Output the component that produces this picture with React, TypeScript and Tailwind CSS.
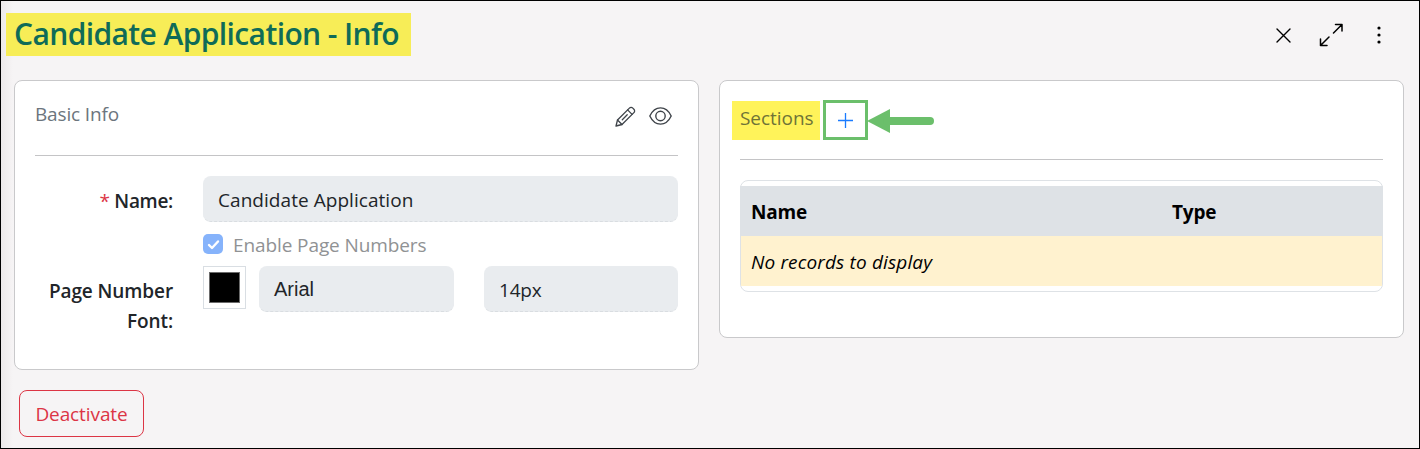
import type { ReactNode } from 'react';

const columns = [
  { label: 'Name', className: 'w-[421px]' },
  { label: 'Type', className: 'flex-1' },
];

function Card({ className, children }: { className: string; children: ReactNode }) {
  return (
    <section className={`w-[685px] rounded-lg border border-[#c9c9cb] bg-white px-5 ${className}`}>
      {children}
    </section>
  );
}

function Field({ className, children }: { className: string; children: ReactNode }) {
  return (
    <div className={`h-[46px] rounded-lg border-b border-dashed border-[#d9dde1] bg-[#e9ecef] pl-[15px] text-[#212529] ${className}`}>
      {children}
    </div>
  );
}

function PencilIcon() {
  return (
    <svg width="21" height="21" viewBox="0 0 21 21" fill="none" stroke="currentColor" strokeWidth="1.3" strokeLinecap="round" strokeLinejoin="round">
      <path d="M1 20l1.5-6L14.4 2.1a2.4 2.4 0 0 1 3.4 0l1.1 1.1a2.4 2.4 0 0 1 0 3.4L7 18.5z" />
      <path d="M2.5 14L7 18.5M12.6 3.9l4.5 4.5M12.2 8.8l-4.9 4.9" />
    </svg>
  );
}

function EyeIcon() {
  return (
    <svg width="23" height="18" viewBox="0 0 23 18" fill="none" stroke="currentColor" strokeWidth="1.4" strokeLinejoin="round">
      <path d="M.8 9C3.3 3.8 7 .9 11.5.9S19.7 3.8 22.2 9C19.7 14.2 16 17.1 11.5 17.1S3.3 14.2.8 9z" />
      <circle cx="11.5" cy="9" r="4.7" />
    </svg>
  );
}

function Header() {
  return (
    <header className="flex h-[79px] items-start justify-between">
      <h1 className="ml-[5px] mt-3 h-[43px] w-[405px] whitespace-nowrap bg-[#f7ed57] pl-2 text-[30px] font-semibold leading-[42px] tracking-[-0.61px] text-[#0f6b58]">
        Candidate Application - Info
      </h1>
      <div className="mr-[38px] mt-[22px] flex items-center text-black">
        <button type="button" aria-label="Close" className="mr-7">
          <svg width="15" height="15" viewBox="0 0 15 15" fill="none" stroke="currentColor" strokeWidth="1.4" strokeLinecap="round">
            <path d="M1 1l13 13M14 1L1 14" />
          </svg>
        </button>
        <button type="button" aria-label="Expand" className="mr-[34px]">
          <svg width="24" height="24" viewBox="0 0 24 24" fill="none" stroke="currentColor" strokeWidth="1.5" strokeLinecap="round" strokeLinejoin="round">
            <path d="M14.5 10L23 1.5M16.5 1.5H23V8M10 14l-8.500 8.500M1.500 16v6.500H8" />
          </svg>
        </button>
        <button type="button" aria-label="More">
          <svg width="4" height="18" viewBox="0 0 4 18" fill="currentColor">
            <circle cx="2" cy="2" r="1.6" />
            <circle cx="2" cy="9" r="1.6" />
            <circle cx="2" cy="16" r="1.6" />
          </svg>
        </button>
      </div>
    </header>
  );
}

function BasicInfo() {
  return (
    <Card className="h-[290px]">
      <div className="flex h-[75px] justify-between border-b border-[#c4c4c6] pr-[6px] text-[#6c757d]">
        <h2 className="mt-[19px] leading-7 tracking-[-0.15px]">Basic Info</h2>
        <div className="mt-[25px] flex items-start gap-[13px] text-[#3f444a]">
          <PencilIcon />
          <div className="pt-px">
            <EyeIcon />
          </div>
        </div>
      </div>

      <div className="mt-5 flex h-[46px]">
        <div className="w-[138px] shrink-0 whitespace-nowrap text-right font-semibold leading-[50px] tracking-[-0.3px] text-[#212529]">
          <span className="font-normal text-[#dc3545]">*</span> Name:
        </div>
        <Field className="ml-[30px] flex-1 leading-[48px] tracking-[0.05px]">Candidate Application</Field>
      </div>

      <div className="ml-[168px] flex h-11 items-center gap-2.5 tracking-[-0.1px] text-[#909294]">
        <span className="grid h-5 w-5 place-items-center rounded-[5px] bg-[#86b3fb]">
          <svg width="13" height="13" viewBox="0 0 13 13" fill="none" stroke="white" strokeWidth="2.4" strokeLinecap="round" strokeLinejoin="round">
            <path d="M2 7l3 3 6-6.5" />
          </svg>
        </span>
        <span className="pt-0.5 leading-7">Enable Page Numbers</span>
      </div>

      <div className="flex">
        <div className="w-[138px] shrink-0 pt-[10px] text-right font-semibold leading-[30px] tracking-[-0.1px] text-[#212529]">
          Page Number Font:
        </div>
        <div className="ml-[30px] h-[43px] w-[43px] border border-[#d9dee3] p-[5px]">
          <div className="h-full w-full border border-[#6b6b6b] bg-black" />
        </div>
        <Field className="ml-[13px] w-[195px] font-['Liberation_Sans',sans-serif] text-[20px] leading-[46px]">Arial</Field>
        <Field className="ml-[30px] flex-1 leading-[48px] tracking-[-0.2px]">14px</Field>
      </div>
    </Card>
  );
}

function Sections() {
  return (
    <Card className="h-[258px]">
      <div className="flex h-[79px] items-start border-b border-[#c4c4c6]">
        <h2 className="-ml-2 mt-5 h-[39px] w-[88px] bg-[#fff35a] pl-2 leading-[34px] tracking-[-0.05px] text-[#6f7337]">Sections</h2>
        <button type="button" aria-label="Add section" className="ml-[3px] mt-[19px] grid h-10 w-[45px] place-items-center border-[3px] border-[#6bbf6b]">
          <svg width="15" height="15" viewBox="0 0 15 15" stroke="#1a7bff" strokeWidth="1.3">
            <path d="M7.5 0v15M0 7.5h15" />
          </svg>
        </button>
        <svg className="-ml-px mt-7" width="67" height="24" viewBox="0 0 67 24">
          <path d="M0 12L23 0v24z" fill="#6bbf6b" />
          <path d="M20 12h43" stroke="#6bbf6b" strokeWidth="8" strokeLinecap="round" />
        </svg>
      </div>

      <div className="mt-5 h-[112px] rounded-lg border border-[#dee2e6] py-[5px] text-black">
        <div className="-mx-px flex h-[50px] bg-[#dee2e6] pl-[11px] font-bold leading-[52px] tracking-[-0.2px]">
          {columns.map((c) => (
            <div key={c.label} className={c.className}>{c.label}</div>
          ))}
        </div>
        <div className="h-[50px] bg-[#fff2cf] pl-[10px] italic leading-[52px] tracking-[0.15px]">No records to display</div>
      </div>
    </Card>
  );
}

export default function App() {
  return (
    <div className="h-[449px] w-[1420px] overflow-hidden border border-black bg-[#f6f4f5] font-['Open_Sans','Noto_Sans',sans-serif] text-[19px]">
      <div className="h-full bg-[linear-gradient(90deg,#ece9ea,#f6f4f5_12px)]">
        <Header />
        <main className="ml-[13px] flex items-start gap-5">
          <BasicInfo />
          <Sections />
        </main>
        <button type="button" className="ml-[18px] mt-5 h-[47px] w-[125px] rounded-lg border border-[#dc3545] pt-0.5 tracking-[-0.1px] text-[#dc3545]">
          Deactivate
        </button>
      </div>
    </div>
  );
}
